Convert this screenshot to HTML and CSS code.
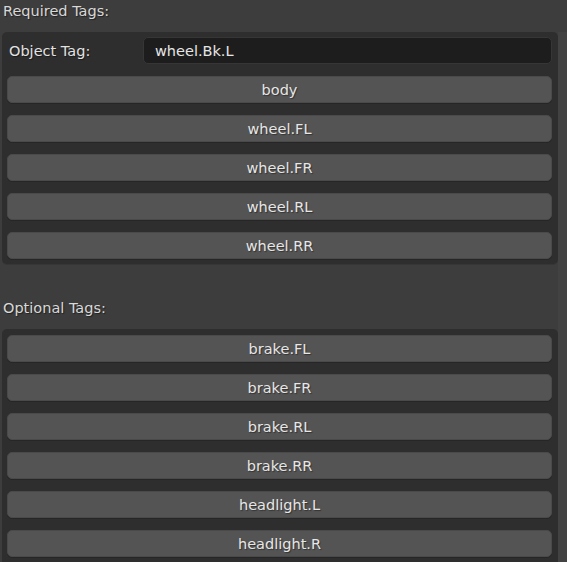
FILE: index.html
```html
<!DOCTYPE html>
<html>
<head>
<meta charset="utf-8">
<link rel="stylesheet" href="styles.css">
</head>
<body>
<div class="layout">
  <main class="main">
    <div class="section-label">Required Tags:</div>
    <div class="panel">
      <div class="field-row">
        <span class="field-label">Object Tag:</span>
        <div class="text-field">wheel.Bk.L</div>
      </div>
      <div class="btn">body</div>
      <div class="btn">wheel.FL</div>
      <div class="btn">wheel.FR</div>
      <div class="btn">wheel.RL</div>
      <div class="btn">wheel.RR</div>
    </div>
    <div class="section-label second">Optional Tags:</div>
    <div class="panel open">
      <div class="btn">brake.FL</div>
      <div class="btn">brake.FR</div>
      <div class="btn">brake.RL</div>
      <div class="btn">brake.RR</div>
      <div class="btn">headlight.L</div>
      <div class="btn">headlight.R</div>
    </div>
  </main>
  <aside class="scroll-strip"></aside>
</div>
</body>
</html>
```
FILE: styles.css
```css
html, body {
  margin: 0;
  padding: 0;
  background: #3d3d3d;
  height: 100%;
  overflow: hidden;
}
body {
  font-family: "DejaVu Sans", "Liberation Sans", sans-serif;
  font-size: 14.5px;
  color: #e2e2e2;
}
.layout {
  display: flex;
  min-height: 100%;
}
.main {
  width: 556px;
  padding-left: 2px;
  flex: none;
}
.scroll-strip {
  flex: 1;
  margin-top: 32px;
  background: #424242;
}
.section-label {
  line-height: 22px;
  margin-bottom: 10px;
  padding-left: 1px;
  color: #d8d8d8;
  text-shadow: 1px 1px 1px rgba(0, 0, 0, 0.45);
}
.section-label.second {
  margin-top: 33px;
}
.panel {
  background: #2e2e2e;
  border-radius: 5px;
  padding: 5px 6px 5px 5px;
  display: flex;
  flex-direction: column;
  gap: 12px;
  box-shadow: 0 1px 0 #363636;
}
.panel.open {
  padding-top: 6px;
  border-bottom-left-radius: 0;
  border-bottom-right-radius: 0;
  padding-bottom: 20px;
}
.field-row {
  display: flex;
  align-items: center;
  height: 27px;
}
.field-label {
  width: 136px;
  padding-left: 2px;
  box-sizing: border-box;
  flex: none;
  color: #e2e2e2;
  text-shadow: 1px 1px 1px rgba(0, 0, 0, 0.45);
}
.text-field {
  flex: 1;
  height: 27px;
  box-sizing: border-box;
  background: #1d1d1d;
  border: 1px solid #363636;
  border-radius: 5px;
  padding-left: 11px;
  line-height: 26px;
  color: #e6e6e6;
}
.btn {
  height: 27px;
  box-sizing: border-box;
  background: #545454;
  border: 1px solid #4a4a4a;
  border-radius: 5px;
  text-align: center;
  line-height: 26px;
  color: #e6e6e6;
  text-shadow: 1px 1px 1px rgba(0, 0, 0, 0.4);
  box-shadow: 0 1px 0 #262626;
}
```
